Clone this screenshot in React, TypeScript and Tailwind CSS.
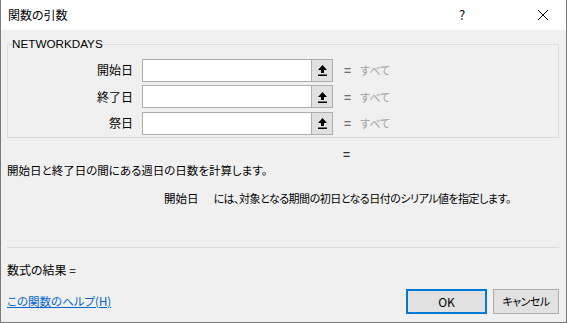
import React from "react";

const font = { fontFamily: '"Noto Sans CJK JP", "Noto Sans", sans-serif' };

function RefIcon() {
  return (
    <svg width="11" height="12" viewBox="0 0 11 12">
      <path d="M5.5 1 L10 6 L7 6 L7 9 L4 9 L4 6 L1 6 Z" fill="#000" />
      <rect x="1" y="10.5" width="9" height="1.5" fill="#000" />
    </svg>
  );
}

function Row({ label }: { label: string }) {
  return (
    <div className="flex items-center h-[26.5px]">
      <div className="w-[120px] text-right text-[12px] text-[#000]">{label}</div>
      <div className="ml-[9px] flex w-[191px] h-[23px] border border-[#adadad] bg-white">
        <div className="flex-1" />
        <div className="w-[21px] h-full border-l border-[#adadad] bg-[#e1e1e1] flex items-center justify-center">
          <RefIcon />
        </div>
      </div>
      <div className="ml-[11px] text-[12px] text-[#6d6d6d] font-bold">=</div>
      <div className="ml-[9px] text-[11px] text-[#a0a0a0]">すべて</div>
    </div>
  );
}

export default function App() {
  return (
    <div
      className="w-[567px] h-[323px] flex flex-col bg-[#f0f0f0] border border-[#7a7a7a] border-t-0 overflow-hidden text-[12px] text-black [font-feature-settings:'palt']"
      style={font}
    >
      <div className="h-[30px] bg-white flex items-center shrink-0">
        <div className="ml-[7px] text-[12px] text-[#000]">関数の引数</div>
        <div className="flex-1" />
        <div className="w-[20px] text-center text-[13px] mr-[65px]">?</div>
        <svg width="12" height="12" viewBox="0 0 12 12" className="mr-[17px]">
          <path d="M1 1 L11 11 M11 1 L1 11" stroke="#000" strokeWidth="1" />
        </svg>
      </div>
      <div className="flex flex-col px-[6px]">
        <fieldset className="mt-[7px] border border-[#dcdcdc] ml-0 mr-[1px] px-[5px] pb-[4px] pt-[6px] h-[101px]">
          <legend
            className="-ml-[1px] px-[0px] text-[11.7px] leading-[14px] text-black"
            style={{ fontFamily: '"Liberation Sans", Arial, sans-serif' }}
          >
            NETWORKDAYS
          </legend>
          <div className="flex flex-col">
            <Row label="開始日" />
            <Row label="終了日" />
            <Row label="祭日" />
          </div>
        </fieldset>
        <div className="h-[16px] mt-[8px] flex">
          <div className="ml-[336px] text-[12px] leading-[16px] font-bold text-[#333]">=</div>
        </div>
        <div className="text-[11.5px] leading-[16px]">開始日と終了日の間にある週日の日数を計算します。</div>
        <div className="flex text-[11px] leading-[16px] mt-[12px] ml-[157px]">
          <span className="text-[11.5px]">開始日</span>
          <span className="ml-[15px] tracking-[-0.5px]">には、対象となる期間の初日となる日付のシリアル値を指定します。</span>
        </div>
        <div className="mt-[41px] border-t border-[#dadada] mr-[1px]" />
        <div className="mt-[14px] text-[12px] leading-[16px]">数式の結果 =</div>
        <div className="flex items-center mt-[11px]">
          <a className="text-[11.5px] text-[#0066cc] underline">この関数のヘルプ(H)</a>
          <div className="flex-1" />
          <button className="w-[81px] h-[25px] border-2 border-[#0078d7] bg-[#e1e1e1] text-[12px] mr-[6px]">OK</button>
          <button className="w-[66px] h-[25px] border border-[#adadad] bg-[#e1e1e1] text-[11px] tracking-[-0.5px] mr-[1px]">キャンセル</button>
        </div>
      </div>
    </div>
  );
}
